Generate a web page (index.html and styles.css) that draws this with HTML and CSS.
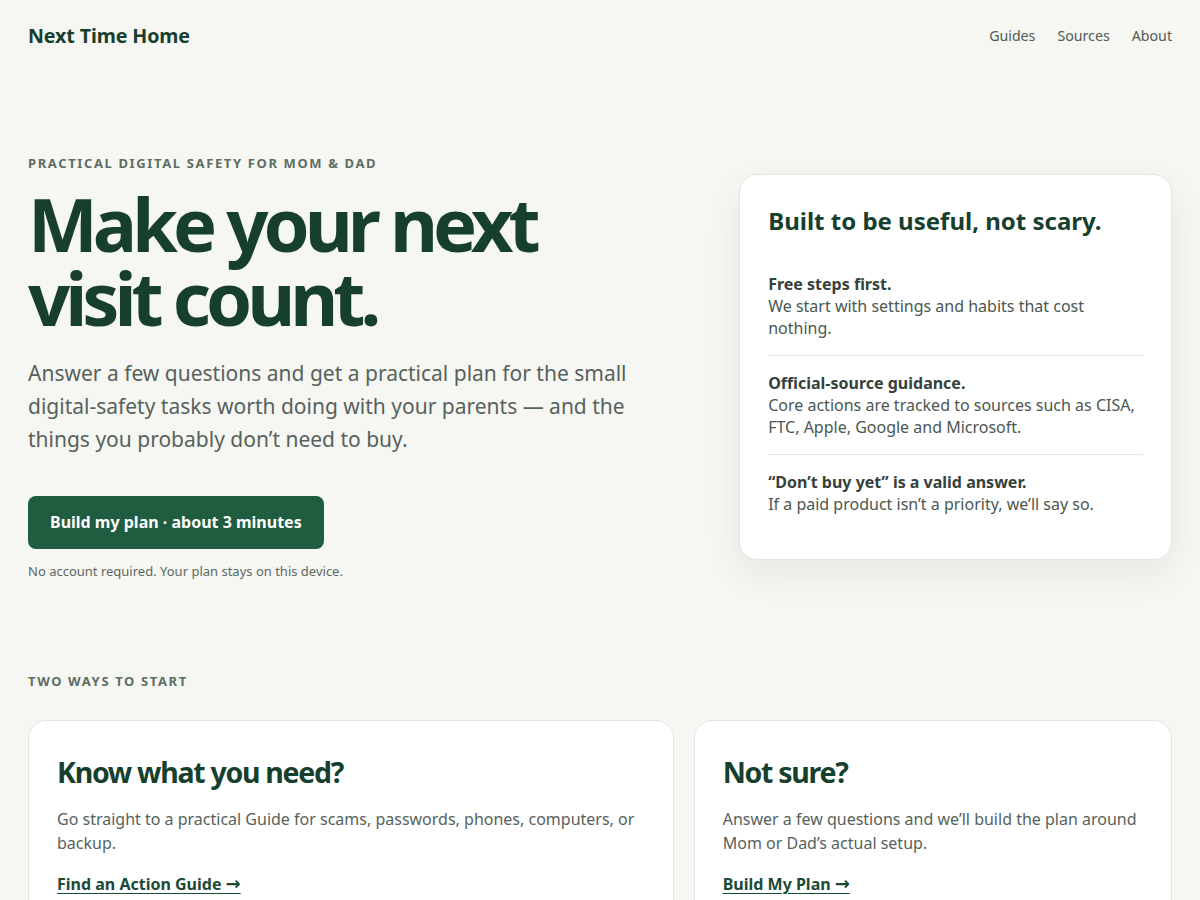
FILE: index.html
```html
<!DOCTYPE html>
<html lang="en">
<head>
<meta charset="utf-8">
<title>Next Time Home</title>
<link rel="stylesheet" href="styles.css">
</head>
<body>
<header class="site-header">
  <a class="logo" href="#">Next Time Home</a>
  <nav class="nav">
    <a href="#">Guides</a>
    <a href="#">Sources</a>
    <a href="#">About</a>
  </nav>
</header>
<main>
  <section class="hero">
    <div class="hero-copy">
      <p class="eyebrow">Practical digital safety for Mom &amp; Dad</p>
      <h1 class="hero-title">Make your next visit count.</h1>
      <p class="hero-lead">Answer a few questions and get a practical plan for the small digital-safety tasks worth doing with your parents — and the things you probably don’t need to buy.</p>
      <a class="btn" href="#">Build my plan · about 3 minutes</a>
      <p class="fine">No account required. Your plan stays on this device.</p>
    </div>
    <aside class="promise">
      <h2 class="promise-title">Built to be useful, not scary.</h2>
      <ul class="promise-list">
        <li><strong>Free steps first.</strong><span>We start with settings and habits that cost nothing.</span></li>
        <li><strong>Official-source guidance.</strong><span>Core actions are tracked to sources such as CISA, FTC, Apple, Google and Microsoft.</span></li>
        <li><strong>“Don’t buy yet” is a valid answer.</strong><span>If a paid product isn’t a priority, we’ll say so.</span></li>
      </ul>
    </aside>
  </section>
  <section class="ways">
    <p class="eyebrow">Two ways to start</p>
    <div class="ways-grid">
      <div class="way-card">
        <h2 class="way-title">Know what you need?</h2>
        <p class="way-text">Go straight to a practical Guide for scams, passwords, phones, computers, or backup.</p>
        <a class="way-link" href="#">Find an Action Guide <span class="arrow">→</span></a>
      </div>
      <div class="way-card">
        <h2 class="way-title">Not sure?</h2>
        <p class="way-text">Answer a few questions and we’ll build the plan around Mom or Dad’s actual setup.</p>
        <a class="way-link" href="#">Build My Plan <span class="arrow">→</span></a>
      </div>
    </div>
  </section>
</main>
</body>
</html>
```
FILE: styles.css
```css
* { box-sizing: border-box; }
html, body { margin: 0; padding: 0; }
body {
  background: #f6f6f2;
  color: #46524c;
  font-family: "Noto Sans", "Open Sans", sans-serif;
  font-size: 16px;
  line-height: 1.4;
}
a { color: inherit; text-decoration: none; }

.site-header {
  display: flex;
  justify-content: space-between;
  align-items: center;
  padding: 0 28px;
  height: 72px;
}
.logo {
  font-size: 19.6px;
  font-weight: 700;
  color: #173f2e;
  letter-spacing: -0.005em;
}
.nav { display: flex; gap: 22px; }
.nav a { font-size: 14.2px; color: #4f5b55; }

.hero {
  display: grid;
  grid-template-columns: 1.5fr 1fr;
  gap: 62px;
  align-items: center;
  padding: 82px 28px 0;
}
.eyebrow {
  margin: 0;
  font-size: 13px;
  font-weight: 700;
  letter-spacing: 0.125em;
  text-transform: uppercase;
  color: #5d6e65;
}
.hero-title {
  margin: 15px 0 0;
  font-size: 74px;
  line-height: 74px;
  font-weight: 700;
  letter-spacing: -0.068em;
  color: #163f2d;
  max-width: 560px;
}
.hero-lead {
  margin: 22px 0 0;
  font-size: 21px;
  line-height: 33px;
  color: #56625c;
  max-width: 620px;
}
.btn {
  display: inline-block;
  margin-top: 40px;
  background: #1f5c40;
  color: #fff;
  font-weight: 700;
  font-size: 16px;
  line-height: 22px;
  padding: 15px 22px 16px;
  border-radius: 8px;
}
.fine {
  margin: 13px 0 0;
  font-size: 13px;
  color: #5c6963;
}

.promise {
  background: #fff;
  border: 1px solid #e3e5df;
  border-radius: 18px;
  box-shadow: 0 14px 36px rgba(30, 50, 40, 0.07);
  padding: 30px 28px 44px;
}
.promise-title {
  margin: 0;
  font-size: 24px;
  line-height: 32px;
  font-weight: 700;
  color: #173f2e;
}
.promise-list {
  list-style: none;
  margin: 36px 0 0;
  padding: 0;
}
.promise-list li {
  display: flex;
  flex-direction: column;
  font-size: 16px;
  line-height: 22px;
  padding: 16px 0;
  border-top: 1px solid #e6e8e3;
  color: #4b5751;
}
.promise-list li:first-child { border-top: 0; padding-top: 0; }
.promise-list li:last-child { padding-bottom: 0; }
.promise-list strong { color: #35413b; font-weight: 700; }

.ways { padding: 92px 28px 0; }
.ways-grid {
  display: grid;
  grid-template-columns: 1.35fr 1fr;
  gap: 20px;
  margin-top: 29px;
}
.way-card {
  background: #fff;
  border: 1px solid #e3e5df;
  border-radius: 18px;
  padding: 33px 28px 40px;
}
.way-title {
  margin: 0;
  font-size: 28.5px;
  line-height: 36px;
  font-weight: 700;
  letter-spacing: -0.045em;
  color: #173f2e;
}
.way-text {
  margin: 17px 0 0;
  font-size: 16px;
  line-height: 24px;
  color: #56625c;
}
.way-link {
  display: inline-block;
  margin-top: 18px;
  font-weight: 700;
  font-size: 16px;
  color: #1c4a35;
  text-decoration: underline;
  text-underline-offset: 3px;
}
.arrow {
  font-family: "DejaVu Sans", sans-serif;
  font-weight: 700;
  font-size: 18px;
  line-height: 1;
}
```
